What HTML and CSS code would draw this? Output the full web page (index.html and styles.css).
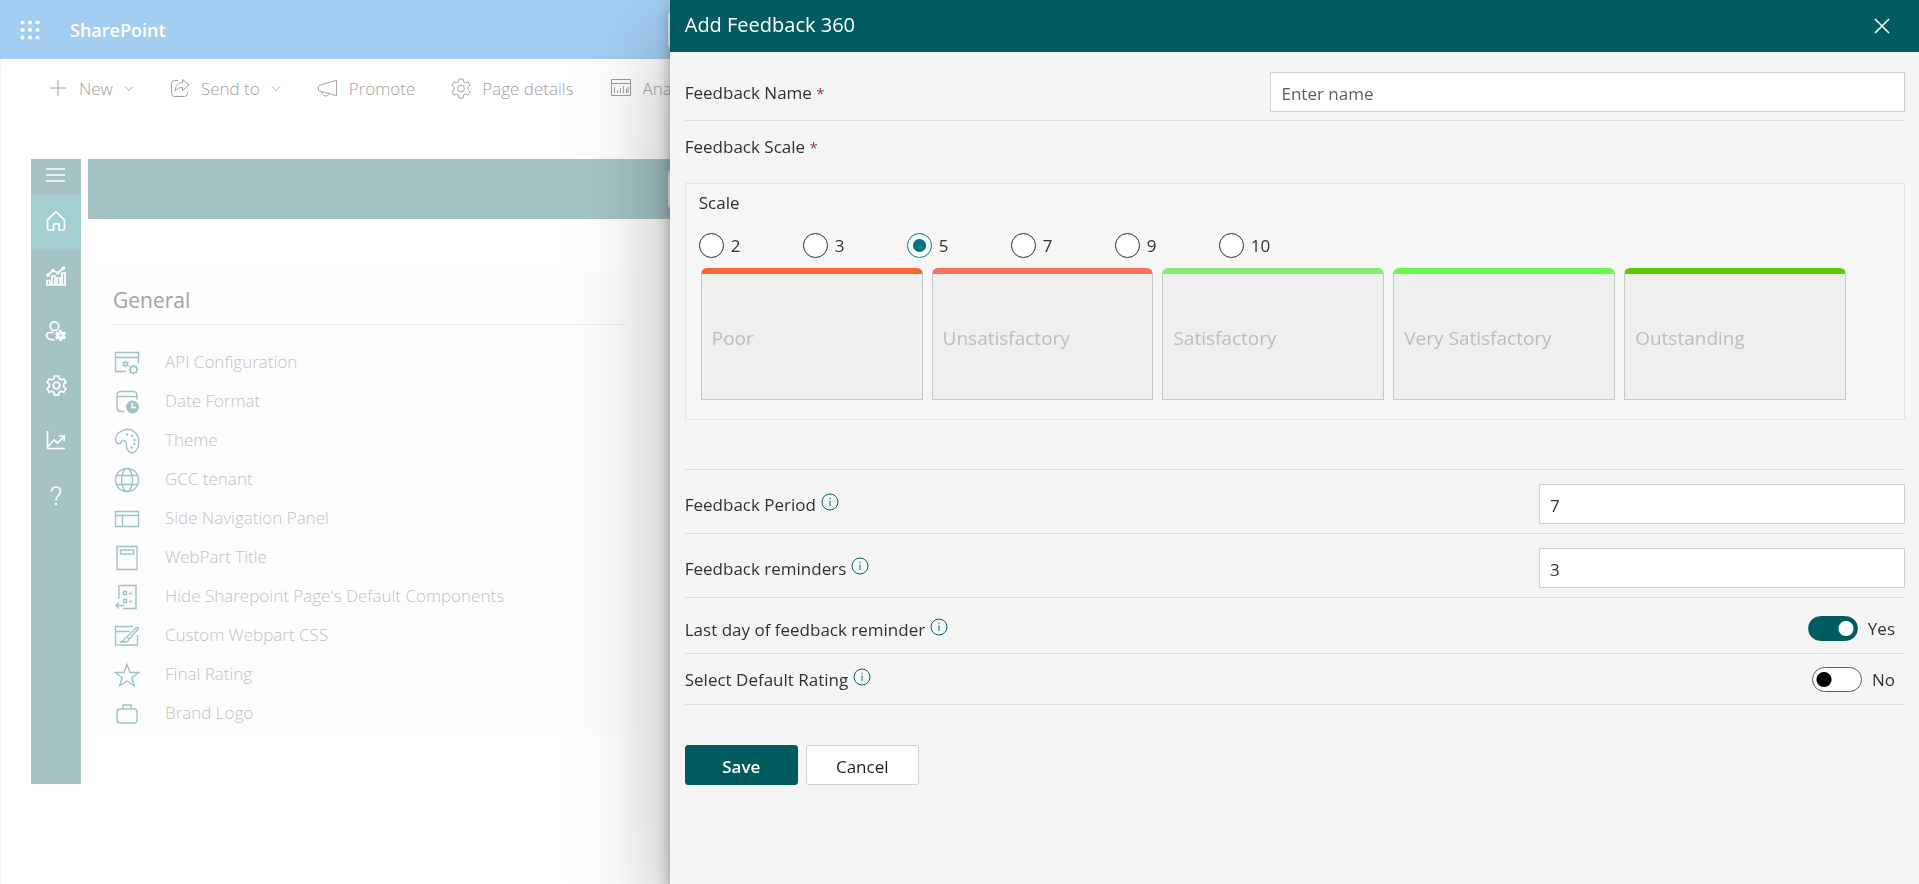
FILE: index.html
```html
<!DOCTYPE html>
<html lang="en">
<head>
<meta charset="utf-8">
<meta name="viewport" content="width=device-width, initial-scale=1">
<title>Add Feedback 360</title>
<link rel="stylesheet" href="styles.css">
</head>
<body>
<div class="page">
  <header class="suite-bar">
    <div class="suite-brand">
      <button class="waffle" type="button" aria-label="App launcher">
        <svg width="20" height="20" viewBox="0 0 20 20" fill="currentColor"><circle cx="2.5" cy="2.5" r="2.1"/><circle cx="10" cy="2.5" r="2.1"/><circle cx="17.5" cy="2.5" r="2.1"/><circle cx="2.5" cy="10" r="2.1"/><circle cx="10" cy="10" r="2.1"/><circle cx="17.5" cy="10" r="2.1"/><circle cx="2.5" cy="17.5" r="2.1"/><circle cx="10" cy="17.5" r="2.1"/><circle cx="17.5" cy="17.5" r="2.1"/></svg>
      </button>
      <a class="suite-name" href="#">SharePoint</a>
    </div>
    <input class="suite-search" type="search" aria-label="Search">
  </header>

  <nav class="command-bar" aria-label="Page commands">
    <button class="command" type="button">
      <svg class="line" width="20" height="20" viewBox="0 0 20 20"><path d="M10 2v16M2 10h16"/></svg>
      <span>New</span>
      <svg class="line chevron" width="10" height="10" viewBox="0 0 12 12"><path d="M1 4l5 5 5-5"/></svg>
    </button>
    <button class="command" type="button">
      <svg class="line" width="20" height="20" viewBox="0 0 20 20"><path d="M8 2.500H4.500A3 3 0 0 0 1.500 5.500V15.500A3 3 0 0 0 4.500 18.500H14.500A3 3 0 0 0 17.500 15.500V14"/><path d="M12.500 1.500l6.500 5.500-6.500 5.500V9.500C9 9.500 7 10.500 5 13c.3-4.500 3-8 7.500-8.500z"/></svg>
      <span>Send to</span>
      <svg class="line chevron" width="10" height="10" viewBox="0 0 12 12"><path d="M1 4l5 5 5-5"/></svg>
    </button>
    <button class="command" type="button">
      <svg class="line" width="21" height="20" viewBox="0 0 22 20"><path d="M20.500 2v16L2.500 13.200l-1-1V8.600l1-1.500z"/><path d="M5 14c0 5 6 6 7.500 2"/></svg>
      <span>Promote</span>
    </button>
    <button class="command" type="button">
      <svg class="line" width="20" height="21" viewBox="1.500 1 21 22"><path d="M9.900 2h4.200l.6 2.900 1.900 1.100 2.800-1 2.100 3.600-2.200 2v2.600l2.200 2-2.100 3.700-2.800-1-1.900 1.100-.6 3H9.900l-.6-3L7.400 18l-2.800 1-2.100-3.700 2.200-2v-2.600l-2.200-2L4.600 5l2.800 1 1.900-1.100z"/><circle cx="12" cy="12" r="3.600"/></svg>
      <span>Page details</span>
    </button>
    <button class="command" type="button">
      <svg class="line" width="22" height="20" viewBox="0 0 22 20"><path d="M1.500 1.500h19v16h-19zM1.500 5.500h19M4.500 9v6M7.500 12v3M10.500 10v5M13.500 8v7M16.500 11v4M18 9v6"/></svg>
      <span>Analytics</span>
    </button>
  </nav>

  <main class="webpart">
    <nav class="side-nav" aria-label="Sections">
      <button class="nav-item menu" type="button" aria-label="Menu">
        <svg width="20" height="14" viewBox="0 0 20 14"><path d="M0 1h19M0 7h19M0 13h19"/></svg>
      </button>
      <button class="nav-item active" type="button" aria-label="Home">
        <svg width="20" height="20" viewBox="0 0 20 20"><path d="M1.500 9L9.500 1.200h1L18.500 9v8.500q0 1.500-1.500 1.500h-3.800v-5q0-1.200-1.200-1.200H8.800q-1.200 0-1.200 1.200v5H3q-1.500 0-1.500-1.500z"/></svg>
      </button>
      <button class="nav-item" type="button" aria-label="Dashboard">
        <svg width="20" height="20" viewBox="0 0 20 20"><path d="M1 14.500h3V19H1zM6 10h3v9H6zM11 12h3v7h-3zM16 7h3v12h-3z"/><path d="M2 9l5-4.500L12 7l5.500-5"/><g fill="currentColor"><circle cx="2" cy="9" r="1"/><circle cx="7" cy="4.500" r="1"/><circle cx="12" cy="7" r="1"/><circle cx="17.500" cy="2" r="1"/></g></svg>
      </button>
      <button class="nav-item" type="button" aria-label="User settings">
        <svg width="22" height="20" viewBox="0 0 22 20"><circle cx="9.500" cy="5.200" r="4.300"/><path d="M8.500 11.500H4.500Q1.500 11.500 1.500 14.500Q2.500 19 9.500 19"/><g fill="currentColor"><circle cx="15.500" cy="14.500" r="3.200"/></g><path stroke-width="3" d="M15.500 9v3M15.500 17v3M10.600 11.800l2.300 1.300M18.100 15.900l2.300 1.300M10.600 17.200l2.300-1.300M18.100 13.100l2.300-1.300"/><circle cx="15.500" cy="14.500" r="1.200" fill="#a5c3c5" stroke="none"/></svg>
      </button>
      <button class="nav-item" type="button" aria-label="Settings">
        <svg width="21" height="21" viewBox="1.500 1.500 21 21"><path d="M9.900 2.500h4.200l.6 2.700 1.900 1.100 2.700-.9 2.100 3.400-2.200 1.900v2.600l2.200 1.900-2.100 3.500-2.700-.9-1.900 1.100-.6 2.800H9.900l-.6-2.800-1.900-1.100-2.700.9-2.100-3.500 2.200-1.900v-2.600L2.600 8.800l2.100-3.400 2.700.9 1.900-1.100z"/><circle cx="12" cy="12" r="3.300"/></svg>
      </button>
      <button class="nav-item" type="button" aria-label="Reports">
        <svg width="20" height="19" viewBox="0 0 20 19"><path d="M1.500 0v17.500H19M2 15.500l6-6.500 3.500 3L18 5.500M13 5h5.200v5.200"/></svg>
      </button>
      <button class="nav-item" type="button" aria-label="Help">
        <svg width="14" height="20" viewBox="0 0 14 20"><path d="M2.500 5.500C2.500-.5 11.500-.5 11.500 5.500C11.500 9.200 7 9.500 7 14.500"/><path stroke-width="2" d="M7 17v2"/></svg>
      </button>
    </nav>
    <div class="content">
      <div class="banner"><button class="banner-action" type="button" aria-label="Banner action"></button></div>
      <section class="general">
        <h2 class="general-title">General</h2>
        <ul class="settings">
          <li><a class="setting" href="#"><svg width="26" height="26" viewBox="0 0 26 26"><path d="M12 21.500H1.500v-19h23v11M1.500 7.500h23"/><circle cx="11.500" cy="14" r="1.800"/><path d="M11.500 10.500v1.700M11.500 15.800v1.700M8.500 12.200l1.400.9M13.100 14.900l1.400.9M8.500 15.800l1.400-.9M13.100 13.100l1.400-.9"/><circle cx="19.500" cy="19.500" r="3.300"/><path d="M19.500 14.500v1.700M19.500 22.800v1.700M14.500 19.500h1.700M22.800 19.500h1.700M16 16l1.200 1.200M21.800 21.800L23 23M16 23l1.200-1.200M21.800 17.200L23 16"/></svg><span>API Configuration</span></a></li>
          <li><a class="setting" href="#"><svg width="26" height="26" viewBox="0 0 26 26"><path d="M10.500 22.500H7Q3 22.500 3 18.500v-12Q3 2.500 7 2.500h12Q23 2.500 23 6.500v4M3 7.500h20"/><circle cx="18.500" cy="18" r="6.500" fill="currentColor" stroke="none"/><path stroke="#fdfdfd" d="M18 14v4.500h4"/></svg><span>Date Format</span></a></li>
          <li><a class="setting" href="#"><svg width="26" height="26" viewBox="0 0 26 26"><path d="M2 13.500C-1 5 13-2.500 20.500 4C27.500 10 25 22 20 24.300C16 26 12 22.500 12.500 16.500C12.500 11.500 8.500 11.500 7 14.500C5.500 16.500 3 16.500 2 13.500z"/><g fill="currentColor" stroke="none"><circle cx="13" cy="6.500" r="1.200"/><circle cx="18" cy="8" r="1.200"/><circle cx="20.500" cy="12" r="1.200"/><circle cx="20.500" cy="16" r="1.200"/><circle cx="17.500" cy="19.500" r="1.200"/></g></svg><span>Theme</span></a></li>
          <li><a class="setting" href="#"><svg width="26" height="26" viewBox="0 0 26 26"><circle cx="13" cy="13" r="11.500"/><ellipse cx="13" cy="13" rx="5.500" ry="11.500"/><path d="M2.500 8.500h21M2.500 17.500h21"/></svg><span>GCC tenant</span></a></li>
          <li><a class="setting" href="#"><svg width="26" height="26" viewBox="0 0 26 26"><path d="M1.500 5.500h23v15h-23zM1.500 9.500h23M8.500 9.500v11"/></svg><span>Side Navigation Panel</span></a></li>
          <li><a class="setting" href="#"><svg width="26" height="26" viewBox="0 0 26 26"><path d="M3 1.500h20v23H3zM6.500 5h13v4h-13z"/></svg><span>WebPart Title</span></a></li>
          <li><a class="setting" href="#"><svg width="26" height="26" viewBox="0 0 26 26"><path d="M5 15V1.500h17v23H9M9.500 7.500h3v3h-3zM9.500 15.500h3v3h-3zM15 9.500h3M15 17.500h3M10.500 21.500H2M5 18.500l-3 3 3 3"/></svg><span>Hide Sharepoint Page's Default Components</span></a></li>
          <li><a class="setting" href="#"><svg width="26" height="26" viewBox="0 0 26 26"><path d="M19 3.500H1.500v18.500h22V12M1.500 8.500h14M6 19h6Q15.500 18 14.500 15.500Q12 13 10.500 16Q10 18.500 6 19M12.500 14.200L22 5q2.500-1.500 2.500.5L15.500 16"/></svg><span>Custom Webpart CSS</span></a></li>
          <li><a class="setting" href="#"><svg width="26" height="26" viewBox="0 0 26 26"><path d="M13 2.500l3 8h8.500l-6.700 5.300 2.500 8L13 19l-7.300 4.800 2.500-8L1.500 10.500H10z"/></svg><span>Final Rating</span></a></li>
          <li><a class="setting" href="#"><svg width="26" height="26" viewBox="0 0 26 26"><rect x="3" y="8" width="20" height="14" rx="3"/><path d="M9 8V4h8v4"/></svg><span>Brand Logo</span></a></li>
        </ul>
      </section>
    </div>
  </main>
</div>

<aside class="panel" role="dialog" aria-labelledby="panel-title">
  <header class="panel-header">
    <h1 class="panel-title" id="panel-title">Add Feedback 360</h1>
    <button class="close" type="button" aria-label="Close"><svg width="16" height="16" viewBox="0 0 16 16"><path d="M1 1l14 14M15 1L1 15"/></svg></button>
  </header>
  <form class="form">
    <div class="row row-name">
      <label class="label" for="name">Feedback Name <span class="required">*</span></label>
      <input class="field field-wide" id="name" type="text" placeholder="Enter name">
    </div>
    <div class="scale-section">
      <div class="label">Feedback Scale <span class="required">*</span></div>
      <fieldset class="scale-box">
        <legend class="scale-legend">Scale</legend>
        <div class="options">
          <label class="option"><input type="radio" name="scale" value="2"><span>2</span></label>
          <label class="option"><input type="radio" name="scale" value="3"><span>3</span></label>
          <label class="option"><input type="radio" name="scale" value="5" checked><span>5</span></label>
          <label class="option"><input type="radio" name="scale" value="7"><span>7</span></label>
          <label class="option"><input type="radio" name="scale" value="9"><span>9</span></label>
          <label class="option"><input type="radio" name="scale" value="10"><span>10</span></label>
        </div>
        <div class="ratings">
          <input class="rating poor" type="text" value="Poor" aria-label="Rating 1" disabled>
          <input class="rating unsatisfactory" type="text" value="Unsatisfactory" aria-label="Rating 2" disabled>
          <input class="rating satisfactory" type="text" value="Satisfactory" aria-label="Rating 3" disabled>
          <input class="rating very-satisfactory" type="text" value="Very Satisfactory" aria-label="Rating 4" disabled>
          <input class="rating outstanding" type="text" value="Outstanding" aria-label="Rating 5" disabled>
        </div>
      </fieldset>
    </div>
    <div class="row row-number">
      <div class="label-group"><label class="label" for="period">Feedback Period</label><button class="info" type="button" aria-label="About feedback period"><svg width="18" height="18" viewBox="0 0 18 18"><circle cx="9" cy="9" r="8"/><path d="M9 7.500v5.500M9 4.800v1.400"/></svg></button></div>
      <input class="field" id="period" type="text" value="7">
    </div>
    <div class="row row-number">
      <div class="label-group"><label class="label" for="reminders">Feedback reminders</label><button class="info" type="button" aria-label="About feedback reminders"><svg width="18" height="18" viewBox="0 0 18 18"><circle cx="9" cy="9" r="8"/><path d="M9 7.500v5.500M9 4.800v1.400"/></svg></button></div>
      <input class="field" id="reminders" type="text" value="3">
    </div>
    <div class="row row-toggle row-last-day">
      <div class="label-group"><label class="label" for="last-day">Last day of feedback reminder</label><button class="info" type="button" aria-label="About last day reminder"><svg width="18" height="18" viewBox="0 0 18 18"><circle cx="9" cy="9" r="8"/><path d="M9 7.500v5.500M9 4.800v1.400"/></svg></button></div>
      <div class="switch"><input class="toggle" id="last-day" type="checkbox" role="switch" checked><span>Yes</span></div>
    </div>
    <div class="row row-toggle">
      <div class="label-group"><label class="label" for="default-rating">Select Default Rating</label><button class="info" type="button" aria-label="About default rating"><svg width="18" height="18" viewBox="0 0 18 18"><circle cx="9" cy="9" r="8"/><path d="M9 7.500v5.500M9 4.800v1.400"/></svg></button></div>
      <div class="switch"><input class="toggle" id="default-rating" type="checkbox" role="switch"><span>No</span></div>
    </div>
    <div class="actions">
      <button class="btn btn-primary" type="button">Save</button>
      <button class="btn" type="button">Cancel</button>
    </div>
  </form>
</aside>
</body>
</html>
```
FILE: styles.css
```css
* { box-sizing: border-box; }

body {
  margin: 0;
  background: #fff;
  color: #323130;
  font-family: "Open Sans", "Noto Sans", sans-serif;
  font-size: 17px;
  overflow: hidden;
}

button, input { font: inherit; color: inherit; }
button { border: 0; padding: 0; background: none; cursor: pointer; }
a { color: inherit; text-decoration: none; }
svg { display: block; flex: none; fill: none; stroke: currentColor; }

/* Page behind the panel */
.page { min-height: 100vh; border-left: 1px solid #f6f6f6; }

.suite-bar {
  display: grid;
  grid-template-columns: 1fr 583px 1fr;
  align-items: center;
  height: 59px;
  margin-left: -1px;
  background: #a3cef1;
  color: #fff;
}
.suite-brand { display: flex; align-items: center; gap: 30px; padding-left: 20px; }
.waffle svg { stroke: none; fill: currentColor; }
.suite-name { font-size: 18px; font-weight: 600; }
.suite-search { height: 38px; border: 0; border-radius: 5px; background: #fff; }

.command-bar {
  display: flex;
  align-items: center;
  gap: 36px;
  width: 34.9%;
  height: 58px;
  padding-left: 47px;
  overflow: hidden;
  color: #a0a0a0;
  font-weight: 300;
}
.command { display: flex; flex: none; align-items: center; gap: 11px; white-space: nowrap; }
.command:last-child { flex: 1; min-width: 0; }
.command:last-child span { overflow: hidden; }
.line { stroke-width: 1; }

.webpart { display: grid; grid-template-columns: 50px 1fr; gap: 7px; margin: 42px 0 0 30px; }
.side-nav { display: flex; flex-direction: column; min-height: 625px; background: #a5c3c5; color: #fff; }
.nav-item { display: grid; place-items: center; height: 55px; padding-bottom: 4px; }
.nav-item svg { stroke-width: 1.700; }
.menu { height: 36px; padding-bottom: 4px; }
.active { background: #a4cfd1; }

.content { display: flex; flex-direction: column; gap: 52px; }
.banner { height: 60px; padding: 10px 0 0 580px; background: #a5c3c5; }
.banner-action { width: 120px; height: 40px; border-radius: 5px; background: #fff; }
.general { width: 562px; padding: 10px 25px 2px; background: #fdfdfd; }
.general-title {
  margin: 0;
  height: 44px;
  line-height: 38px;
  border-bottom: 1px solid #efefef;
  color: #a3a3a3;
  font-size: 21px;
  font-weight: 400;
}
.settings { margin: 0; padding: 18px 0 0; list-style: none; }
.setting { display: flex; align-items: center; gap: 25px; height: 39px; padding-left: 1px; color: #a0c3c6; }
.setting span { padding-bottom: 2px; color: #c2c2c2; font-weight: 300; }
.setting svg { stroke-width: 1.400; }

/* Panel */
.panel {
  position: fixed;
  inset: 0 0 0 auto;
  width: 65.1%;
  background: #f5f5f5;
  box-shadow: 0 41px 92px rgba(0, 0, 0, .32), 0 8px 14px rgba(0, 0, 0, .32);
}
.panel-header {
  display: flex;
  align-items: center;
  justify-content: space-between;
  height: 52px;
  padding: 0 29px 4px 15px;
  background: #025c5f;
  color: #fff;
}
.panel-title { margin: 0; font-size: 20px; font-weight: 400; }
.close { padding-top: 4px; }
.close svg { stroke-width: 1.600; }

.form { padding: 0 14px 0 15px; }
.row { display: flex; align-items: center; justify-content: space-between; border-bottom: 1px solid #dcdcdc; }
.row-name { padding: 20px 0 8px; }
.label { padding-top: 2px; color: #323130; line-height: 24px; }
.required { color: #a4373a; font-size: 15px; }
.field {
  width: 30%;
  height: 40px;
  padding: 3px 10px 0;
  border: 1px solid #cfcfcf;
  border-radius: 0;
  background: #fff;
  outline: none;
}
.field-wide { width: 52%; }
.field::placeholder { color: #605e5c; opacity: 1; }

.scale-section { padding: 12px 0 49px; border-bottom: 1px solid #dcdcdc; }
.scale-box { margin: 24px 0 0; padding: 7px 13px 19px; border: 1px solid #e5e5e5; background: #f6f6f6; }
.scale-legend { float: left; width: 100%; padding: 0; line-height: 24px; }
.options { clear: both; display: flex; padding-top: 17px; }
.option { display: flex; align-items: center; gap: 7px; width: 104px; height: 26px; }
.option input {
  appearance: none;
  width: 25px;
  height: 25px;
  margin: 0;
  border: 1px solid #323130;
  border-radius: 50%;
  background: #fff;
}
.option input:checked { border-color: #03787c; background: radial-gradient(circle, #03787c 6px, #fff 7px); }
.ratings { display: grid; grid-template-columns: repeat(5, 1fr); gap: 9px; margin: 10px 45px 0 2px; }
.rating {
  min-width: 0;
  width: 100%;
  height: 132px;
  padding: 3px 10px 0;
  border: 1px solid #c8c8c8;
  border-top-width: 6px;
  border-radius: 6px 6px 0 0;
  background: #efefef;
  color: #bdbdbd;
  font-size: 19px;
}
.poor { border-top-color: #fa6733; }
.unsatisfactory { border-top-color: #ff715b; }
.satisfactory { border-top-color: #84ee70; }
.very-satisfactory { border-top-color: #66fa4a; }
.outstanding { border-top-color: #5fc909; }

.row-number { padding: 14px 0 9px; }
.label-group { display: flex; align-items: center; gap: 5px; }
.info { padding-bottom: 4px; color: #03686c; }
.row-toggle { height: 51px; }
.row-last-day { height: 56px; padding-top: 6px; }
.switch { display: flex; align-items: center; gap: 10px; padding-right: 10px; }
.toggle {
  appearance: none;
  width: 50px;
  height: 25px;
  margin: 0;
  border: 1px solid #605e5c;
  border-radius: 13px;
  background: radial-gradient(circle at 11px 50%, #000 7px, #fff 8px);
}
.toggle:checked { border-color: #025c5f; background: radial-gradient(circle at 37px 50%, #fff 7px, #025c5f 8px); }

.actions { display: flex; gap: 8px; padding-top: 40px; }
.btn { width: 113px; height: 40px; padding-top: 2px; border: 1px solid #cfcfcf; border-radius: 3px; background: #fff; color: #201f1e; }
.btn-primary { border-color: #025c5f; background: #025c5f; color: #fff; font-weight: 600; }
```
